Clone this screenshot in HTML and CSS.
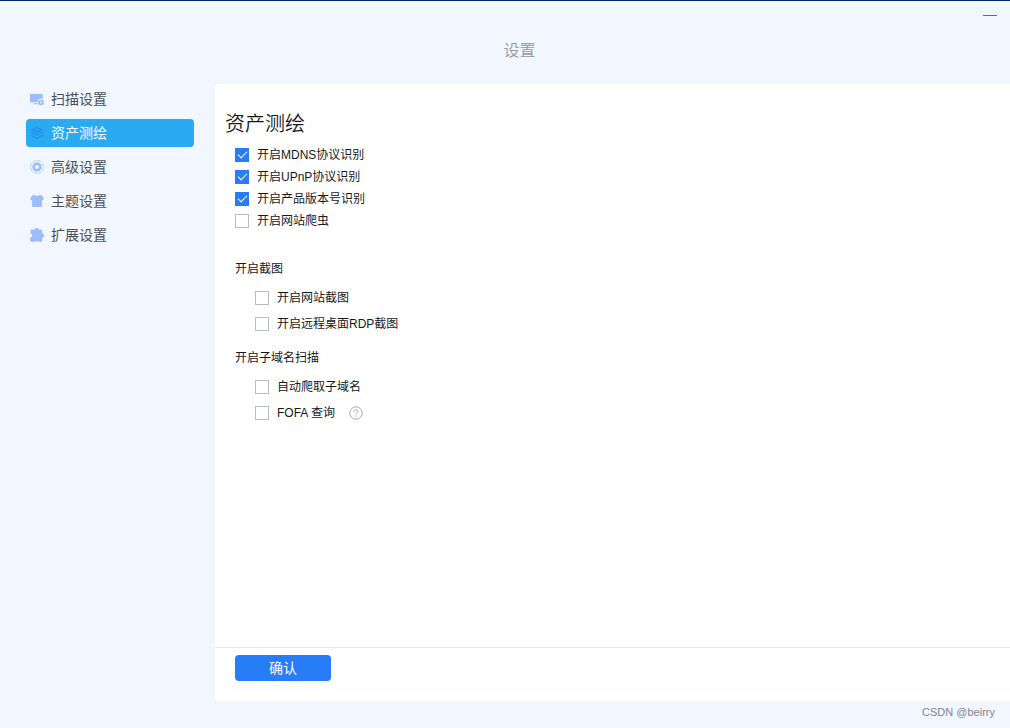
FILE: index.html
```html
<!DOCTYPE html>
<html lang="zh-CN">
<head>
<meta charset="utf-8">
<title>设置</title>
<link rel="stylesheet" href="styles.css">
</head>
<body>
<div class="window">
  <header class="titlebar">
    <h1 class="title">设置</h1>
    <button class="minimize" type="button" aria-label="最小化"><span class="minimize-line"></span></button>
  </header>
  <div class="body">
    <nav class="sidebar">
      <a class="nav-item" href="#scan">
        <svg class="nav-icon" viewBox="0 0 14 14" aria-hidden="true"><path d="M0 2h12.800v5.200l-1.800-.9-2.600 1.300-.9 2.700H0zM3.500 11.300H8v1H3.500z"/><path fill-rule="evenodd" d="M11 7.300l1.100.9 1.300-.1.100 1.400.5 1-.5 1-.1 1.300-1.300-.1-1.100.8-1.100-.8-1.300.1-.1-1.300-.6-1 .6-1 .1-1.400 1.300.1zM11 9.500a1 1 0 1 0 0 2 1 1 0 0 0 0-2z"/></svg>
        <span>扫描设置</span>
      </a>
      <a class="nav-item active" href="#assets" aria-current="page">
        <svg class="nav-icon" viewBox="0 0 14 14" aria-hidden="true"><path d="M7 .5l6.800 3.500L7 7.500.2 4zM.2 6.600l1.500-.8L7 8.500l5.300-2.700 1.500.8L7 10zM.2 9.600l1.500-.8L7 11.500l5.300-2.700 1.500.8L7 13z"/><path class="layer-mark" d="M7 2.300l2 1.800H7.600v1.500H6.400V4.100H5z"/></svg>
        <span>资产测绘</span>
      </a>
      <a class="nav-item" href="#advanced">
        <svg class="nav-icon" viewBox="0 0 14 14" aria-hidden="true"><circle class="ring" cx="7" cy="7" r="6.500"/><circle class="core" cx="7" cy="7" r="3.400"/></svg>
        <span>高级设置</span>
      </a>
      <a class="nav-item" href="#theme">
        <svg class="nav-icon" viewBox="0 0 14 14" aria-hidden="true"><path d="M4.500.8c1 1.500 4 1.500 5 0L12 1.600l2 3.400-1.700 1.500-.4-.3V12q0 1-1 1H3.100q-1 0-1-1V6.200l-.4.3L0 5l2-3.400z"/></svg>
        <span>主题设置</span>
      </a>
      <a class="nav-item" href="#extensions">
        <svg class="nav-icon" viewBox="0 0 14 14" aria-hidden="true"><path d="M1.500 1.500h3a2.200 2 0 0 1 4.300 0h2.400q1 0 1 1v3.100a2 2 0 0 1 0 4v3.200q0 1-1 1H8.800a2 1.300 0 0 0-3.800 0H1.200q-1 0-1-1V9.400a2 1.800 0 0 0 .3-3.600V2.500q0-1 1-1z"/></svg>
        <span>扩展设置</span>
      </a>
    </nav>
    <main class="panel">
      <form class="form">
        <div class="content">
          <h2 class="heading">资产测绘</h2>
          <div class="options">
            <label class="option"><input class="check" type="checkbox" checked><span>开启MDNS协议识别</span></label>
            <label class="option"><input class="check" type="checkbox" checked><span>开启UPnP协议识别</span></label>
            <label class="option"><input class="check" type="checkbox" checked><span>开启产品版本号识别</span></label>
            <label class="option"><input class="check" type="checkbox"><span>开启网站爬虫</span></label>
          </div>
          <fieldset class="group">
            <legend class="legend">开启截图</legend>
            <label class="option"><input class="check" type="checkbox"><span>开启网站截图</span></label>
            <label class="option"><input class="check" type="checkbox"><span>开启远程桌面RDP截图</span></label>
          </fieldset>
          <fieldset class="group">
            <legend class="legend">开启子域名扫描</legend>
            <label class="option"><input class="check" type="checkbox"><span>自动爬取子域名</span></label>
            <div class="option-row">
              <label class="option"><input class="check" type="checkbox"><span>FOFA 查询</span></label>
              <button class="help" type="button" aria-label="帮助">
                <svg class="help-icon" viewBox="0 0 14 14" aria-hidden="true"><circle cx="7" cy="7" r="6.200"/><path d="M5.100 5.600C5.100 3 9 3.100 8.900 5.500 8.900 6.800 7 6.900 7 8.400M7 9.600v1.100"/></svg>
              </button>
            </div>
          </fieldset>
        </div>
        <div class="actions"><button class="confirm" type="button">确认</button></div>
      </form>
    </main>
  </div>
  <footer class="credit">CSDN @beirry</footer>
</div>
</body>
</html>
```
FILE: styles.css
```css
* {
  box-sizing: border-box;
}

body {
  margin: 0;
  background: #f1f6ff;
  color: #16181d;
  font: 12px/18px "Liberation Sans", "Noto Sans CJK SC", sans-serif;
}

button,
input {
  font: inherit;
}

.window {
  display: flex;
  flex-direction: column;
  min-height: 100vh;
  border-top: 1px solid #002b5c;
}

.titlebar {
  position: relative;
  padding: 38px 0 21px 29px;
}

.title {
  margin: 0;
  color: #95989e;
  font-size: 16px;
  font-weight: 350;
  line-height: 24px;
  text-align: center;
}

.minimize {
  position: absolute;
  top: 4px;
  right: 8px;
  display: grid;
  place-items: center;
  width: 24px;
  height: 21px;
  padding: 0;
  border: 0;
  background: none;
}

.minimize-line {
  width: 14px;
  height: 1px;
  background: #65686d;
}

.body {
  display: flex;
  flex: 1;
}

.sidebar {
  display: flex;
  flex: 0 0 215px;
  flex-direction: column;
  gap: 6px;
  padding: 1px 21px 0 26px;
}

.nav-item {
  display: flex;
  align-items: center;
  gap: 7px;
  height: 28px;
  padding-left: 4px;
  border-radius: 4px;
  color: #4d5057;
  font-size: 14px;
  text-decoration: none;
}

.nav-item.active {
  background: #29aaf1;
  color: #fff;
}

.nav-icon {
  width: 14px;
  height: 14px;
  fill: #9bbefa;
}

.active .nav-icon {
  fill: #2495ef;
}

.nav-icon .layer-mark {
  fill: #29aaf1;
}

.ring,
.core {
  fill: none;
  stroke: #9bbefa;
}

.ring {
  stroke-dasharray: 4 1;
  stroke-width: 1;
  opacity: 0.7;
}

.core {
  stroke-width: 2.6;
}

.panel {
  display: flex;
  flex: 1;
  border-radius: 4px 0 0 4px;
  background: #fff;
}

.form {
  display: flex;
  flex: 1;
  flex-direction: column;
}

.content {
  flex: 1;
  padding: 25px 20px 24px;
}

.heading {
  margin: 0 0 6px -10px;
  font-size: 20px;
  font-weight: 350;
  line-height: 30px;
}

.options {
  display: flex;
  flex-direction: column;
  align-items: flex-start;
  gap: 4px;
  margin-bottom: 30px;
  padding-top: 1px;
}

.option {
  display: flex;
  align-items: center;
  gap: 8px;
  height: 18px;
}

.check {
  appearance: none;
  display: grid;
  place-items: center;
  width: 14px;
  height: 14px;
  margin: 0;
  border: 1px solid #b8bcc9;
  background: #fff;
}

.check:checked {
  border-color: #277df8;
  background: #277df8;
}

.check:checked::before {
  content: "";
  width: 8px;
  height: 4px;
  margin-bottom: 3px;
  border-bottom: 1px solid #fff;
  border-left: 1px solid #fff;
  transform: rotate(-45deg);
}

.group {
  display: flex;
  flex-direction: column;
  align-items: flex-start;
  gap: 8px;
  margin: 0 0 16px;
  padding: 0 0 0 20px;
  border: 0;
}

.legend {
  margin: 0 0 11px -20px;
  padding: 0;
}

.option-row {
  display: flex;
  align-items: center;
  gap: 14px;
}

.help {
  display: grid;
  padding: 0;
  border: 0;
  background: none;
}

.help-icon {
  width: 14px;
  height: 14px;
  fill: none;
  stroke: #a5a8ad;
}

.actions {
  padding: 7px 20px 20px;
  border-top: 1px solid #e8eaed;
}

.confirm {
  display: block;
  width: 96px;
  height: 26px;
  padding: 0;
  border: 0;
  border-radius: 4px;
  background: #277df8;
  color: #fff;
  font-size: 14px;
}

.credit {
  padding: 2px 15px 7px;
  color: #84878c;
  font-size: 11px;
  text-align: right;
}
```
